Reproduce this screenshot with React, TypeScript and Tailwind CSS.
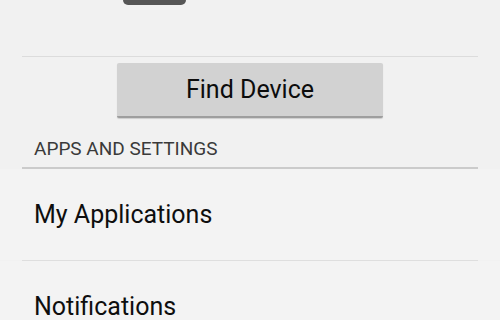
export default function App() {
  return (
    <div
      className="w-[500px] h-[320px] overflow-hidden bg-[#f1f1f1]"
      style={{ fontFamily: 'Roboto, "Liberation Sans", sans-serif' }}
    >
      <div className="h-[56px] px-[22px]">
        <div className="ml-[101px] w-[63px] h-[5px] rounded-b-[5px] bg-[#565656]" />
      </div>
      <div className="mx-[22px] h-px bg-[#dcdcdc]" />
      <div className="flex justify-center pt-[6px]">
        <button className="w-[266px] h-[55px] bg-[#d2d2d2] border-b-2 border-[#9e9e9e] rounded-[2px] shadow-[0_1px_1px_rgba(0,0,0,0.15)] text-[25px] text-[#0c0c0c] flex items-center justify-center">
          Find Device
        </button>
      </div>
      <div className="px-[34px] pt-[20px] h-[49px] text-[19px] text-[#3a3a3a] leading-[22px]">
        APPS AND SETTINGS
      </div>
      <div className="mx-[22px] h-[2px] bg-[#cbcbcb]" />
      <div className="h-[91px] px-[34px] flex items-center text-[25px] text-[#0e0e0e] bg-[#f3f3f3]">
        My Applications
      </div>
      <div className="mx-[22px] h-px bg-[#dedede]" />
      <div className="h-[91px] px-[34px] flex items-center text-[25px] text-[#0e0e0e] bg-[#f3f3f3]">
        Notifications
      </div>
    </div>
  );
}
